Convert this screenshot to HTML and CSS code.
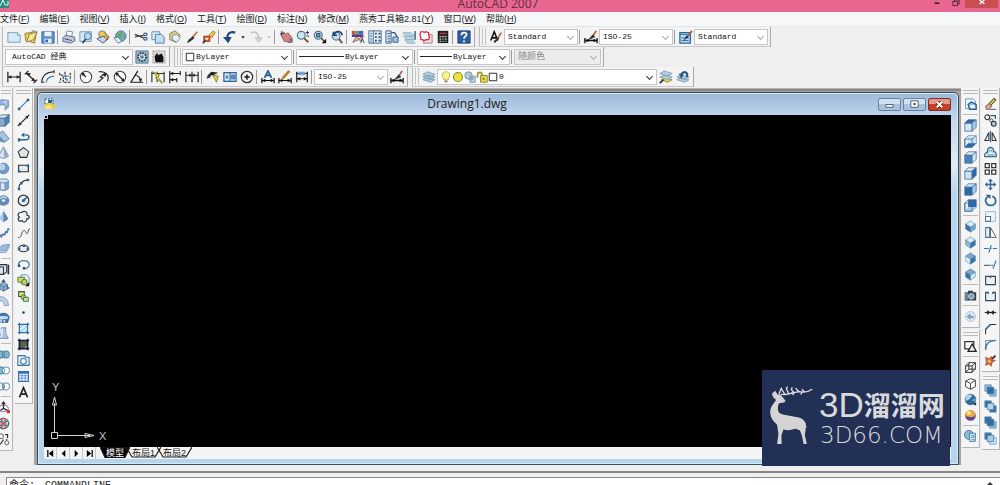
FILE: index.html
```html
<!DOCTYPE html>
<html lang="zh-CN">
<head>
<meta charset="utf-8">
<title>AutoCAD 2007</title>
<link rel="stylesheet" href="styles.css">
</head>
<body>
<svg class="sprite" aria-hidden="true">
<symbol id="new" viewBox="0 0 16 16"><path d="M1 3h11l3 3v8H1z" fill="#d5ecf8" stroke="#6f93ad"/><path d="M12 3v3h3" fill="#fff" stroke="#6f93ad"/></symbol>
<symbol id="open" viewBox="0 0 16 16"><path d="M1 4l5-1 8 1-2 11-10-3z" fill="#ecc95a" stroke="#8a7630"/><path d="M6 5l9-3-4 9-8 3z" fill="#f8e79b" stroke="#8a7630"/><path d="M8 3c2-3 5-2 6 0" fill="none" stroke="#456"/></symbol>
<symbol id="save" viewBox="0 0 16 16"><path d="M1 2h14v13H1z" fill="#5c93cf" stroke="#39649b"/><path d="M4 2h8v5H4zM4 10h8v5H4z" fill="#e4f0fa"/><path d="M5 11h3v3H5z" fill="#39649b"/></symbol>
<symbol id="print" viewBox="0 0 16 16"><path d="M4 8L6 1l6 1-1 6z" fill="#fff" stroke="#667aa0"/><path d="M1 9l3-3 10 2 1 4-5 3-9-2z" fill="#c2c9e2" stroke="#4c5c8a"/><path d="M3 10l8 2" stroke="#334" /></symbol>
<symbol id="preview" viewBox="0 0 16 16"><path d="M1 2h13v11H1z" fill="#d7eaf6" stroke="#6b8fb0"/><circle cx="10" cy="7" r="4" fill="#b3d9f3" stroke="#476f96"/><path d="M8 10l-4 5" stroke="#334c66" stroke-width="2"/></symbol>
<symbol id="publish" viewBox="0 0 16 16"><circle cx="7" cy="5" r="4" fill="#f2cb4d" stroke="#5b7d90"/><path d="M1 10l7-3 6 3-6 5z" fill="#c3d3ee" stroke="#3c5485"/><path d="M10 3l5 5-4 4" fill="#e2a63c" stroke="#6a5630"/></symbol>
<symbol id="globe" viewBox="0 0 16 16"><circle cx="9" cy="7" r="6" fill="#6ea9d6" stroke="#47749c"/><path d="M5 4l5-2 1 4-3 4-3-2zM11 8l3-1-1 4z" fill="#6aa95a"/><path d="M1 9l5-1 4 5-4 2z" fill="#e8eef8" stroke="#5a7698"/></symbol>
<symbol id="cut" viewBox="0 0 16 16"><path d="M1 5l10 4M1 8l10-2" stroke="#333" stroke-width="1.3"/><ellipse cx="13" cy="5" rx="2" ry="1.5" fill="none" stroke="#38608c" stroke-width="1.3"/><ellipse cx="13" cy="10" rx="2" ry="1.5" fill="none" stroke="#38608c" stroke-width="1.3"/></symbol>
<symbol id="copy" viewBox="0 0 16 16"><path d="M1 2h9v9H1z" fill="#dceefa" stroke="#5c86ad"/><path d="M5 5h7l3 3v7H5z" fill="#c2e0f4" stroke="#4a76a0"/></symbol>
<symbol id="paste" viewBox="0 0 16 16"><path d="M2 4l6-3 6 5-5 8-7-3z" fill="#d7cf84" stroke="#7c7a4e"/><path d="M5 6l5-1 4 4-4 5-5-3z" fill="#e8f3f8" stroke="#6a8aa0"/></symbol>
<symbol id="brush" viewBox="0 0 16 16"><path d="M14 2L8 9" stroke="#c87640" stroke-width="2"/><path d="M9 7l2 2-5 4-4 2 2-4z" fill="#333"/></symbol>
<symbol id="match" viewBox="0 0 16 16"><path d="M8 6l5-5 2 2-4 6z" fill="#f3ce3a" stroke="#856b20"/><path d="M2 7h7v6H2z" fill="#e4602e" stroke="#8a3a20"/><path d="M4 9h3v2H4z" fill="#fff"/><path d="M1 15l3-3" stroke="#333" stroke-width="2"/></symbol>
<symbol id="undo" viewBox="0 0 16 16"><path d="M14 3C8 1 4 4 5 12" fill="none" stroke="#1f487e" stroke-width="2.6"/><path d="M0 8h10l-4 7z" fill="#1f487e"/></symbol>
<symbol id="redo" viewBox="0 0 16 16"><path d="M2 3c6-2 10 1 9 9" fill="none" stroke="#c3c6ca" stroke-width="2"/><path d="M7 9h8l-4 5z" fill="#d5d8db" stroke="#b5b8bb"/></symbol>
<symbol id="dot" viewBox="0 0 6 16"><path d="M1 7h4L3 10z" fill="currentColor"/></symbol>
<symbol id="pan" viewBox="0 0 16 16"><path d="M2 5l3-3 3 3 2-2 5 6-3 5-6-1z" fill="#cf8580" stroke="#994f55"/><path d="M1 4h5M3 1v6M12 10l3 3M15 10v4h-4" stroke="#2a4a6c" fill="none"/></symbol>
<symbol id="zoomrt" viewBox="0 0 16 16"><circle cx="6" cy="6" r="4.5" fill="#cae5f5" stroke="#4c7598" stroke-width="1.3"/><path d="M9 9l5 5" stroke="#7a6040" stroke-width="2.4"/><path d="M11 3h4M13 1v4M12 7h3" stroke="#224"/></symbol>
<symbol id="zoomwin" viewBox="0 0 16 16"><circle cx="6" cy="6" r="4.5" fill="#cae5f5" stroke="#4c7598" stroke-width="1.3"/><path d="M4 4h4v4H4z" fill="#6498bc" stroke="#345"/><path d="M9 9l4 4" stroke="#7a6040" stroke-width="2.4"/><path d="M15 10v5h-5z" fill="#111"/></symbol>
<symbol id="zoomprev" viewBox="0 0 16 16"><circle cx="7" cy="7" r="4.5" fill="#bddcf1" stroke="#4c7598" stroke-width="1.3"/><path d="M10 10l4 5" stroke="#7a6040" stroke-width="2.4"/><path d="M14 6c-1-5-7-6-9-1M4 2v4h4" fill="none" stroke="#24496f" stroke-width="1.8"/></symbol>
<symbol id="props" viewBox="0 0 16 16"><path d="M1 1h4v4H1z" fill="#d14f45"/><path d="M5 1h4v4H5z" fill="#4cab50"/><path d="M9 1h5v4H9z" fill="#4164d0"/><path d="M1 5h13v3H1z" fill="#5b3980"/><path d="M2 14l4-6 3 2 5-3-2 6-3-2z" fill="#e8b9a0" stroke="#835c64"/><path d="M11 15l2-5 2 5" fill="none" stroke="#245"/></symbol>
<symbol id="dc" viewBox="0 0 16 16"><path d="M1 1h14v14H1z" fill="#e4f1fb" stroke="#31577e"/><path d="M6 1v14" stroke="#31577e"/><path d="M3 4h1M3 7h1M3 10h1M3 13h1M8 4h2M12 4h2M8 8h2M12 8h2M8 12h2M12 12h2" stroke="#244d7a" stroke-width="2"/></symbol>
<symbol id="palette" viewBox="0 0 16 16"><path d="M1 1h6v14H1z" fill="#cfe5f6" stroke="#31577e"/><path d="M3 4h3M3 7h3M3 10h3M3 13h3" stroke="#244d7a"/><path d="M7 3h4l3 5" fill="none" stroke="#31577e" stroke-width="1.5"/><path d="M9 8h6v6H9z" fill="#9fc4e5" stroke="#31577e"/></symbol>
<symbol id="sheet" viewBox="0 0 16 16"><path d="M1 3h9l5 4H6zM1 7h9l5 4H6zM3 11h8l4 4H6z" fill="#b9d5e5" stroke="#8fb0c4"/><path d="M15 1v10" stroke="#58809a" stroke-width="2"/></symbol>
<symbol id="markup" viewBox="0 0 16 16"><path d="M5 5h10v10H5z" fill="#f3dbdd" stroke="#a78"/><path d="M2 2h3l1 1 2-1 3 1v3l1 2-1 3H8l-2 1-2-1H2V8L1 6z" fill="#fff" stroke="#d52a38" stroke-width="1.4"/></symbol>
<symbol id="calc" viewBox="0 0 16 16"><path d="M2 1h12v14H2z" fill="#222"/><path d="M4 3h8v2H4z" fill="#a83a50"/><path d="M4 7.500h2M7 7.500h2M10 7.500h2M4 10.500h2M10 10.500h2M4 13h2" stroke="#ccc" stroke-width="1.5"/><path d="M7 10.500h2M7 13h2M10 13h2" stroke="#4aa268" stroke-width="1.5"/></symbol>
<symbol id="help" viewBox="0 0 16 16"><path d="M1 1h14v14H1z" fill="#2a5d9c" stroke="#173d70"/><path d="M5 6c0-4 6-4 6-1 0 2-3 2-3 5M8 12v2" fill="none" stroke="#fff" stroke-width="2"/></symbol>
<symbol id="tstyle" viewBox="0 0 16 16"><path d="M2 12L6 2l4 10M4 9h5" fill="none" stroke="#111" stroke-width="1.8"/><path d="M14 3l-5 8" stroke="#b66a3c" stroke-width="2"/><path d="M6 14l5-5" stroke="#333" stroke-width="2.4"/></symbol>
<symbol id="dstyle" viewBox="0 0 16 16"><path d="M1 9v6M15 9v6M1 12h14" stroke="#111" stroke-width="1.5"/><path d="M1 12l4-2v4zM15 12l-4-2v4z" fill="#111"/><path d="M14 1l-4 6" stroke="#a9613d" stroke-width="2"/><path d="M4 12l6-7 3 3z" fill="#333"/></symbol>
<symbol id="bstyle" viewBox="0 0 16 16"><path d="M1 3h12v12H1z" fill="#b4d6ee" stroke="#2f67a0" stroke-width="1.5"/><path d="M1 5h12M3 9h8M3 12h8" stroke="#2f67a0"/><path d="M15 1l-5 6" stroke="#a9613d" stroke-width="2"/><path d="M5 12l4-6 2 2z" fill="#224"/></symbol>
<symbol id="gear" viewBox="0 0 16 16"><path d="M1 1h14v14H1z" fill="#8bb3cf" stroke="#527b9a"/><circle cx="8" cy="8" r="4.500" fill="#dce9f0" stroke="#333" stroke-width="2" stroke-dasharray="2 1"/><circle cx="8" cy="8" r="2" fill="#4f7694"/></symbol>
<symbol id="wspace" viewBox="0 0 16 16"><path d="M1 1h14v14H1z" fill="#d7d7d7" stroke="#999" stroke-dasharray="2 1"/><path d="M3 7l3-4 1 3 4-2 2 4v6H4z" fill="#111"/></symbol>
<symbol id="dlin" viewBox="0 0 16 16"><path d="M1 2v12M15 2v12M1 8h14" stroke="#222" stroke-width="1.400"/><path d="M1 8l4-2v4zM15 8l-4-2v4z" fill="#222"/></symbol>
<symbol id="dali" viewBox="0 0 16 16"><path d="M1 5l4-4M11 15l4-4M3 4l10 9" stroke="#222" stroke-width="1.500"/><path d="M3 3l5 1-3 3zM13 13l-5-1 3-3z" fill="#222"/></symbol>
<symbol id="darc" viewBox="0 0 16 16"><path d="M1 14C1 6 7 2 15 2" fill="none" stroke="#222" stroke-width="1.300"/><path d="M6 14c0-4 4-7 9-7" fill="none" stroke="#4c86b5" stroke-width="1.500"/><path d="M0 14h4M15 0v4" stroke="#222"/></symbol>
<symbol id="dord" viewBox="0 0 16 16"><path d="M2 3v3h4v8h9M8 2v5h4M14 3v9M1 14h2M3 9v3" fill="none" stroke="#222" stroke-width="1.200" stroke-dasharray="3 1"/><path d="M8 9l3 3" stroke="#4b79a5" stroke-width="2"/></symbol>
<symbol id="drad" viewBox="0 0 16 16"><circle cx="8" cy="8" r="6.500" fill="#f8fafb" stroke="#444" stroke-width="1.200"/><path d="M4 4l4 4" stroke="#222" stroke-width="1.300"/><path d="M3 3l4 1-3 3z" fill="#222"/></symbol>
<symbol id="djog" viewBox="0 0 16 16"><path d="M3 2c8-1 13 4 10 11M2 14l6-5-3-1 5-4" fill="none" stroke="#333" stroke-width="1.400"/><path d="M12 3l-1 5-4-3z" fill="#222"/></symbol>
<symbol id="ddia" viewBox="0 0 16 16"><circle cx="8" cy="8" r="6.500" fill="#f8fafb" stroke="#444" stroke-width="1.200"/><path d="M4 4l8 8" stroke="#222" stroke-width="1.500"/><path d="M3 3l4 1-3 3zM13 13l-4-1 3-3z" fill="#222"/></symbol>
<symbol id="dang" viewBox="0 0 16 16"><path d="M15 14H1L9 1M5 6c4 0 7 2 7 7" fill="none" stroke="#222" stroke-width="1.400"/><path d="M12 14l-2-4h4z" fill="#222"/></symbol>
<symbol id="qdim" viewBox="0 0 16 16"><path d="M1 2v12M7 2v12M15 2v12M1 4h14" stroke="#333" stroke-width="1.300"/><path d="M2 2l8 4-2 2 5 7-8-6 2-1z" fill="#e6db3c" stroke="#84791e"/></symbol>
<symbol id="dbase" viewBox="0 0 16 16"><path d="M2 1v14M14 1v5M10 9v5M2 4h12M2 11h8" stroke="#222" stroke-width="1.300"/><path d="M2 4l4-2v4zM2 11l4-2v4z" fill="#222"/></symbol>
<symbol id="dcont" viewBox="0 0 16 16"><path d="M1 2v12M8 2v12M15 2v12M1 6h14" stroke="#222" stroke-width="1.300"/><path d="M8 6L5 4v4zM8 6l3-2v4z" fill="#222"/></symbol>
<symbol id="lead" viewBox="0 0 16 16"><path d="M1 7l5-5 8 1-6 3z" fill="#222"/><path d="M8 6l6 1-2 7z" fill="#e6d83c" stroke="#84791e"/><path d="M1 9l4-2" stroke="#333" stroke-width="2"/></symbol>
<symbol id="tol" viewBox="0 0 16 16"><path d="M1 3h14v10H1z" fill="#c9e2f5" stroke="#2f6496" stroke-width="1.400"/><path d="M8 3v10M3 8h3M4.500 6v4M10 6h3v4h-3zM10 8h3" fill="none" stroke="#2f6496" stroke-width="1.200"/></symbol>
<symbol id="center" viewBox="0 0 16 16"><circle cx="8" cy="8" r="6.500" fill="none" stroke="#333" stroke-width="1.400"/><path d="M5 8h6M8 5v6" stroke="#111" stroke-width="1.600"/></symbol>
<symbol id="dedit" viewBox="0 0 16 16"><path d="M1 9v6M15 9v6M1 12h14" stroke="#111" stroke-width="1.400"/><path d="M1 12l4-2v4zM15 12l-4-2v4z" fill="#111"/><path d="M4 9l4-8 4 8M6 6h4" fill="none" stroke="#2d5d9b" stroke-width="2"/></symbol>
<symbol id="dtedit" viewBox="0 0 16 16"><path d="M1 9v6M15 9v6M1 12h14" stroke="#111" stroke-width="1.400"/><path d="M1 12l4-2v4zM15 12l-4-2v4z" fill="#111"/><path d="M5 10l8-9" stroke="#b98222" stroke-width="3"/></symbol>
<symbol id="dupd" viewBox="0 0 16 16"><path d="M2 2v12M14 2v12M1 4h14M1 10h14" stroke="#222" stroke-width="1.400"/><path d="M4 2h8v4H4z" fill="#74a6ce"/><path d="M2 10l4-2v4zM14 10l-4-2v4z" fill="#111"/></symbol>
<symbol id="layers" viewBox="0 0 16 16"><path d="M1 11l5-2 9 2-5 3zM1 8l5-2 9 2-5 3zM1 5l5-3 9 3-5 3z" fill="#b4cfe0" stroke="#7c9db2"/></symbol>
<symbol id="layercur" viewBox="0 0 16 16"><path d="M3 11l5-2 7 2-5 3z" fill="#e5db4a" stroke="#858040"/><path d="M1 8l5-2 9 2-5 3zM1 4l5-3 9 3-5 3z" fill="#b4cfe0" stroke="#7c9db2"/><path d="M1 15l4-4" stroke="#333" stroke-width="2"/></symbol>
<symbol id="layerprev" viewBox="0 0 16 16"><path d="M1 11l5-2 9 2-5 3zM1 8l5-2 9 2-5 3z" fill="#b4cfe0" stroke="#7c9db2"/><path d="M12 8c3-5-3-8-6-3" fill="none" stroke="#28577f" stroke-width="2.500"/><path d="M3 4l6 1-3 5z" fill="#28577f"/></symbol>
<symbol id="bulb" viewBox="0 0 16 16"><path d="M5 10C1 6 3 1 8 1s7 5 3 9v2H5z" fill="#fbf38d" stroke="#a99b39"/><path d="M6 13h4v2H6z" fill="#777"/></symbol>
<symbol id="sun" viewBox="0 0 16 16"><circle cx="8" cy="8" r="6" fill="#eee23d" stroke="#89853f" stroke-width="1.500"/></symbol>
<symbol id="vpf" viewBox="0 0 16 16"><circle cx="6" cy="6" r="5" fill="#b4ccd4" stroke="#647f88"/><path d="M8 7h7v8H8z" fill="#c4dcec" stroke="#5c7992"/><circle cx="10" cy="10" r="3" fill="#87adbd"/></symbol>
<symbol id="lock" viewBox="0 0 16 16"><path d="M2 9V5c0-4 6-4 6 0v3" fill="none" stroke="#a39e3c" stroke-width="2.500"/><path d="M6 6h9v9H6z" fill="#e4d93d" stroke="#78732d"/><path d="M10 9v3" stroke="#78732d" stroke-width="2"/></symbol>
<symbol id="swatch" viewBox="0 0 16 16"><path d="M2 2h12v12H2z" fill="#fff" stroke="#222" stroke-width="1.500"/></symbol>
<symbol id="line" viewBox="0 0 16 16"><path d="M2 14L14 2" stroke="#3f6f9f" stroke-width="1.400"/><path d="M1 12h3v3H1zM12 1h3v3h-3z" fill="#265b92"/></symbol>
<symbol id="xline" viewBox="0 0 16 16"><path d="M1 15L15 1" stroke="#222" stroke-width="1.500"/><path d="M2 14l1-4 3 3zM14 2l-1 4-3-3z" fill="#222"/></symbol>
<symbol id="pline" viewBox="0 0 16 16"><path d="M2 12h9c5 0 5-6 0-6H9" fill="none" stroke="#2e6790" stroke-width="1.700"/><path d="M9 3v6L5 6zM1 10h3v4H1z" fill="#2e6790"/></symbol>
<symbol id="poly" viewBox="0 0 16 16"><path d="M8 2l6.500 5-2.500 7H4L1.500 7z" fill="#dbe7ed" stroke="#333" stroke-width="1.300"/></symbol>
<symbol id="rect" viewBox="0 0 16 16"><path d="M2 4h12v8H2z" fill="#e1edf5" stroke="#333" stroke-width="1.400"/><path d="M1 10h3v3H1zM12 3h3v3h-3z" fill="#2c638f"/></symbol>
<symbol id="arc" viewBox="0 0 16 16"><path d="M2 14C2 7 6 3 14 2" fill="none" stroke="#333" stroke-width="1.400"/><path d="M1 12h3v3H1zM12 1h3v3h-3zM4 5h3v3H4z" fill="#2c638f"/></symbol>
<symbol id="circle" viewBox="0 0 16 16"><circle cx="8" cy="8" r="6.500" fill="#e3f0f8" stroke="#333" stroke-width="1.500"/><path d="M8 8l4-4" stroke="#2c638f" stroke-width="2"/><circle cx="8" cy="8" r="2" fill="#2c638f"/></symbol>
<symbol id="cloud" viewBox="0 0 16 16"><path d="M6 3c3-3 8 0 6 3 4 1 4 5 0 5 0 4-4 5-6 2-4 2-6-2-3-4-4-3 0-7 3-6z" fill="#eaf4fa" stroke="#333" stroke-width="1.400"/></symbol>
<symbol id="spline" viewBox="0 0 16 16"><path d="M1 14c3 1 4-1 5-5s4-5 5-1 3-1 4-5" fill="none" stroke="#444" stroke-width="1.200"/></symbol>
<symbol id="ellipse" viewBox="0 0 16 16"><ellipse cx="8" cy="8" rx="6" ry="4" fill="#e0edf6" stroke="#333" stroke-width="1.500"/><path d="M1 7h3v3H1zM12 7h3v3h-3zM7 3h3v3H7z" fill="#2c638f"/></symbol>
<symbol id="earc" viewBox="0 0 16 16"><path d="M2 9C0 2 15 1 15 8c0 3-3 5-6 5" fill="none" stroke="#46799e" stroke-width="1.600"/><path d="M1 8h3v3H1zM7 11h3v3H7z" fill="#225785"/></symbol>
<symbol id="insert" viewBox="0 0 16 16"><path d="M5 1h7l3 3v8H5z" fill="#dceefa" stroke="#5c86ad"/><path d="M1 4h8v6H1z" fill="#cddd68" stroke="#526c2c"/><circle cx="9" cy="10" r="3.500" fill="#b9d05f" stroke="#526c2c"/><path d="M15 10v5h-5z" fill="#111"/></symbol>
<symbol id="block" viewBox="0 0 16 16"><path d="M2 2h7v6H2z" fill="#d4e178" stroke="#3e5c40" stroke-width="1.300"/><circle cx="8" cy="9" r="3" fill="#b9d05f" stroke="#3e5c40"/><path d="M8 9h6v5H8z" fill="#b9e0a0" stroke="#3e5c40"/></symbol>
<symbol id="point" viewBox="0 0 16 16"><circle cx="8" cy="8" r="1.600" fill="#17496f"/></symbol>
<symbol id="hatch" viewBox="0 0 16 16"><path d="M3 3h10v10H3z" fill="#dcf0fc"/><path d="M3 1v14M13 1v14M1 3h14M1 13h14" stroke="#2e6b9e" stroke-width="1.500"/><path d="M3 8l5-5M4 13l9-9M9 13l4-4" stroke="#6ca4ce"/></symbol>
<symbol id="grad" viewBox="0 0 16 16"><path d="M3 3h10v10H3z" fill="#59664e"/><path d="M8 13l5-5v5z" fill="#a4b077"/><path d="M3 1v14M13 1v14M1 3h14M1 13h14" stroke="#161d3b" stroke-width="2"/></symbol>
<symbol id="region" viewBox="0 0 16 16"><path d="M1 2h9v2h5v10H1z" fill="#d8ecf9" stroke="#3f76a3" stroke-width="1.300"/><circle cx="8" cy="9" r="3.500" fill="#fff" stroke="#3f76a3" stroke-width="1.300"/></symbol>
<symbol id="table" viewBox="0 0 16 16"><path d="M2 2h12v12H2z" fill="#f2f8ff" stroke="#326bb0" stroke-width="1.400"/><path d="M2 3h12" stroke="#326bb0" stroke-width="3"/><path d="M2 7h12M2 10h12M6 2v12M10 2v12" stroke="#5b8cc8"/></symbol>
<symbol id="mtext" viewBox="0 0 16 16"><path d="M3 14L8 2l5 12M4.500 10h7" fill="none" stroke="#222" stroke-width="2"/></symbol>
<symbol id="psolid" viewBox="0 0 16 16"><path d="M1 4l5-2 8 1v8l-4 4V8L1 9z" fill="#91b4dc" stroke="#6286ae"/><path d="M7 5l4-1v5" fill="none" stroke="#e7f0fa"/></symbol>
<symbol id="cube" viewBox="0 0 16 16"><path d="M1 5h9v10H1z" fill="var(--f)" stroke="#456f98"/><path d="M1 5l4-4h10l-5 4z" fill="var(--t)" stroke="#456f98"/><path d="M10 5l5-4v9l-5 5z" fill="var(--s)" stroke="#456f98"/></symbol>
<symbol id="cubein" viewBox="0 0 16 16"><path d="M1 5l4-4h10v9l-5 5H1z" fill="#e4f2fb" stroke="#456f98"/><path d="M5 1h10v9H5z" fill="var(--b)"/><path d="M1 15l4-5h10l-5 5z" fill="var(--d)"/><path d="M1 5h9v10H1zM10 5l5-4" fill="none" stroke="#456f98"/></symbol>
<symbol id="iso" viewBox="0 0 16 16"><path d="M8 1l6 4-6 4-6-4z" fill="var(--t)" stroke="#58819f" stroke-width=".7"/><path d="M2 5l6 4v6l-6-4z" fill="var(--f)" stroke="#58819f" stroke-width=".7"/><path d="M14 5L8 9v6l6-4z" fill="var(--s)" stroke="#58819f" stroke-width=".7"/></symbol>
<symbol id="wedge" viewBox="0 0 16 16"><path d="M1 6l6-5 8 10-6 4z" fill="#a9c4e3" stroke="#5b7ea6"/><path d="M1 6v7l8 2z" fill="#6f97c3" stroke="#5b7ea6"/></symbol>
<symbol id="cone" viewBox="0 0 16 16"><path d="M8 1l6 11c-2 4-10 4-12 0z" fill="#d7e3f1" stroke="#647e9c"/><path d="M8 1l6 11c-1 2-3 2-5 3z" fill="#8eabcb"/></symbol>
<symbol id="sphere" viewBox="0 0 16 16"><circle cx="8" cy="8" r="6.500" fill="#739bc9" stroke="#537aa8"/><circle cx="6" cy="6" r="4" fill="#b9d1ec"/></symbol>
<symbol id="cyl" viewBox="0 0 16 16"><path d="M2 3v10c2 3 10 3 12 0V3z" fill="#7ea3cf" stroke="#5a7fa9"/><path d="M5 5v9h4V5z" fill="#dce8f7"/><ellipse cx="8" cy="3.500" rx="6" ry="2.500" fill="#d0e0f3" stroke="#5a7fa9"/></symbol>
<symbol id="torus" viewBox="0 0 16 16"><ellipse cx="8" cy="8" rx="4.700" ry="4" fill="none" stroke="#5f8bbb" stroke-width="5"/><path d="M4 6c2-3 5-3 8-1" fill="none" stroke="#bfd6ef" stroke-width="2"/></symbol>
<symbol id="pyr" viewBox="0 0 16 16"><path d="M8 1l6 10-6 4-6-4z" fill="#b1cce9"/><path d="M8 1l6 10-6 4z" fill="#5986b8"/></symbol>
<symbol id="helix" viewBox="0 0 16 16"><path d="M1 13c4-6 4 4 5-1s3 2 4-3 2 2 3-3 1 0 2-3" fill="none" stroke="#4d76a8" stroke-width="2"/></symbol>
<symbol id="plane" viewBox="0 0 16 16"><path d="M1 11L6 4l9-1-4 8z" fill="#9abbe1" stroke="#6e93be"/><path d="M1 11v2h10l4-7V3" fill="none" stroke="#6e93be"/></symbol>
<symbol id="extrude" viewBox="0 0 16 16"><path d="M1 5h7v9H1zM1 5l3-3h8v9l-4 3" fill="#d9e5ef" stroke="#333" stroke-width="1.300"/><path d="M14 2v12" stroke="#234" stroke-width="2"/></symbol>
<symbol id="press" viewBox="0 0 16 16"><path d="M8 4l5 3v5l-5 3-5-3V7z" fill="#8fb1d4" stroke="#41658c"/><path d="M3 7l5 3 5-3M8 10v5" fill="none" stroke="#41658c"/><path d="M8 0l3 4H5zM0 11l4-2v4zM16 11l-4-2v4z" fill="#345a80"/></symbol>
<symbol id="sweep" viewBox="0 0 16 16"><path d="M1 3c7-3 13 2 13 10h-5c0-5-3-7-8-5z" fill="#bed1e7" stroke="#7692b4"/></symbol>
<symbol id="revolve" viewBox="0 0 16 16"><path d="M1 8c1-7 13-7 14 0l-2 6H3z" fill="#3e78ac" stroke="#27577f"/><ellipse cx="8" cy="8" rx="6" ry="2" fill="#c4def2"/><path d="M5 10v4M9 11v3" stroke="#dbe9f5" stroke-width="2"/></symbol>
<symbol id="loft" viewBox="0 0 16 16"><path d="M5 1h6c-1 6 0 8 3 13H2c3-5 4-7 3-13z" fill="#a9c4e3" stroke="#6587af"/><path d="M6 2c1 5 0 8-1 11" stroke="#e9f1fa" fill="none" stroke-width="2"/></symbol>
<symbol id="bool" viewBox="0 0 16 16"><circle cx="5" cy="8" r="4.500" fill="var(--f)" stroke="#3d7493"/><circle cx="11" cy="8" r="4.500" fill="var(--s)" stroke="#3d7493"/><path d="M8 5c2 2 2 4 0 6-2-2-2-4 0-6" fill="var(--t)" stroke="#3d7493"/></symbol>
<symbol id="move3" viewBox="0 0 16 16"><path d="M8 1v8l7 4M8 9l-6 4" fill="none" stroke="#222" stroke-width="1.400"/><ellipse cx="8" cy="9" rx="6" ry="4" fill="none" stroke="#748"/><path d="M12 11h4v4h-4z" fill="#c5393d"/><path d="M5 4l3-4 3 4z" fill="#333"/></symbol>
<symbol id="rot3" viewBox="0 0 16 16"><circle cx="8" cy="8" r="6.500" fill="none" stroke="#356c92" stroke-width="1.300"/><ellipse cx="8" cy="8" rx="3" ry="6.500" fill="none" stroke="#a5474e" stroke-width="1.300"/><ellipse cx="8" cy="8" rx="6.500" ry="3" fill="none" stroke="#45707c" stroke-width="1.300"/><path d="M6 6h4v4H6z" fill="#cf5b5b"/></symbol>
<symbol id="align3" viewBox="0 0 16 16"><circle cx="5" cy="4" r="3" fill="none" stroke="#444"/><circle cx="12" cy="12" r="2.500" fill="none" stroke="#444"/><path d="M10 2h3v4M4 14l4-6M12 7v2" fill="none" stroke="#333" stroke-width="1.400"/></symbol>
<symbol id="views" viewBox="0 0 16 16"><path d="M2 1h9l3 3v9H2z" fill="#edf6fc" stroke="#5d87ac"/><path d="M5 8l4-3 6 3v6H7z" fill="#9bc4e6" stroke="#245989" stroke-width="1.500"/><path d="M8 9h5v3H8z" fill="#fff"/></symbol>
<symbol id="camera" viewBox="0 0 16 16"><path d="M1 4h4V2h6v2h4v10H1z" fill="#304152"/><path d="M1 4h4v9H1z" fill="#718496"/><circle cx="9" cy="9" r="3.500" fill="#7da2bc" stroke="#dae4ec"/></symbol>
<symbol id="back" viewBox="0 0 16 16"><circle cx="8" cy="8" r="6" fill="#e4edf4" stroke="#9bb3c7"/><path d="M3 8l5-4v3h4v3H8v2z" fill="#7ba3c5"/></symbol>
<symbol id="vs2d" viewBox="0 0 16 16"><path d="M1 2h11v9H1z" fill="#fff" stroke="#333" stroke-width="1.500"/><path d="M5 14L10 5l5 9z" fill="#e7f0f5" stroke="#222" stroke-width="1.500"/></symbol>
<symbol id="wire" viewBox="0 0 16 16"><path d="M2 6h8v8H2zM6 2h8v8M2 6l4-4v8h8M10 6l4-4M10 14l4-4M2 14l4-4" fill="none" stroke="#333" stroke-width="1.200"/></symbol>
<symbol id="hidden" viewBox="0 0 16 16"><path d="M2 5l6-3 6 2v8l-6 3-6-3zM2 5l6 3 6-4M8 8v7" fill="#fff" stroke="#444" stroke-width="1.200"/></symbol>
<symbol id="real" viewBox="0 0 16 16"><circle cx="8" cy="8" r="6.500" fill="#2c6a98" stroke="#3d6481"/><path d="M2 5c4-5 8-3 8-1L6 8 2 10z" fill="#acd3ea"/><path d="M9 9l5-3v5z" fill="#70a5c9"/><path d="M12 12h3v3h-3z" fill="#333"/></symbol>
<symbol id="concept" viewBox="0 0 16 16"><circle cx="8" cy="8" r="6.500" fill="#564992"/><path d="M2 9C0 0 13-1 14 7 10 13 5 8 2 9" fill="#f3a63a"/><circle cx="6" cy="5" r="2.500" fill="#ffe58e"/></symbol>
<symbol id="vsman" viewBox="0 0 16 16"><circle cx="6" cy="6" r="5.500" fill="#8bb9d8" stroke="#366a94"/><path d="M7 4h7v10H7z" fill="#e0f0fb" stroke="#366a94"/><path d="M9 7h4M9 9h4M9 12h4" stroke="#366a94"/></symbol>
<symbol id="erase" viewBox="0 0 16 16"><path d="M14 1L7 8" stroke="#4b4a35" stroke-width="4"/><path d="M13 2L7 8" stroke="#e8cf47" stroke-width="2"/><path d="M2 10l4-3 4 3-4 4H3z" fill="#dba49a" stroke="#784a45"/><path d="M7 14h8" stroke="#333"/></symbol>
<symbol id="copyobj" viewBox="0 0 16 16"><circle cx="4" cy="4" r="3" fill="#eaf4fa" stroke="#333" stroke-width="1.300"/><circle cx="12" cy="12" r="3" fill="#a5cbe5" stroke="#333" stroke-width="1.300"/><path d="M8 2h6v4" fill="none" stroke="#285e8c" stroke-width="1.500"/><circle cx="9" cy="8" r="2" fill="none" stroke="#333"/></symbol>
<symbol id="mirror" viewBox="0 0 16 16"><path d="M8 1v14" stroke="#2d6593" stroke-width="1.400"/><path d="M6 3v10H1zM10 3v10h5z" fill="#eaf3f8" stroke="#333" stroke-width="1.300"/></symbol>
<symbol id="offset" viewBox="0 0 16 16"><path d="M1 13c-1-5 3-5 3-5C4 0 12 0 12 7c4 0 3 6 3 6z" fill="#e4f2fa" stroke="#386d94" stroke-width="1.600"/><path d="M4 11h9M6 8c0-4 4-4 4 0" fill="none" stroke="#386d94"/></symbol>
<symbol id="array" viewBox="0 0 16 16"><path d="M1.500 2h5v5h-5zM9.500 2h5v5h-5zM1.500 10h5v5h-5zM9.500 10h5v5h-5z" fill="#fff" stroke="#333" stroke-width="1.500"/></symbol>
<symbol id="move" viewBox="0 0 16 16"><path d="M8 2v12M2 8h12" stroke="#2d699f" stroke-width="1.800"/><path d="M8 1l3 3H5zM8 15l3-3H5zM1 8l3-3v6zM15 8l-3-3v6z" fill="#2d699f"/></symbol>
<symbol id="rotate" viewBox="0 0 16 16"><path d="M5 3C-1 7 3 15 9 14c7-1 7-9 1-11" fill="none" stroke="#386e99" stroke-width="2.200"/><path d="M2 1h6v5z" fill="#285f8c"/></symbol>
<symbol id="scale" viewBox="0 0 16 16"><path d="M2 2h12v12H2z" fill="#eef5fa" stroke="#8fabc2"/><path d="M2 8h6v6H2z" fill="#fff" stroke="#47779f" stroke-width="1.300"/></symbol>
<symbol id="stretch" viewBox="0 0 16 16"><path d="M2 2h5v12H2z" fill="#e7f0f7" stroke="#45769d" stroke-width="1.300"/><path d="M8 2l7 12H8z" fill="#fff" stroke="#444"/></symbol>
<symbol id="trim" viewBox="0 0 16 16"><path d="M0 8h5M11 8h5M6 13l3-9" stroke="#3778a8" stroke-width="1.400"/><path d="M5 8h6" stroke="#3778a8" stroke-dasharray="1 1"/></symbol>
<symbol id="extend" viewBox="0 0 16 16"><path d="M0 9h6M11 13l4-10" stroke="#3778a8" stroke-width="1.400"/><path d="M6 9h6" stroke="#222" stroke-dasharray="2 1"/></symbol>
<symbol id="breakpt" viewBox="0 0 16 16"><path d="M2 3h12v10H2z" fill="#e5eff8" stroke="#444" stroke-width="1.400"/><path d="M7 2h2v3H7z" fill="#35709e"/></symbol>
<symbol id="break" viewBox="0 0 16 16"><path d="M5 3H2v10h12V3h-3" fill="#e5eff8" stroke="#444" stroke-width="1.400"/><path d="M4 2h2v3H4zM10 2h2v3h-2z" fill="#35709e"/></symbol>
<symbol id="join" viewBox="0 0 16 16"><path d="M1 8h14" stroke="#222" stroke-width="1.500"/><path d="M4 5l4 3-4 3zM12 5L8 8l4 3z" fill="#222"/></symbol>
<symbol id="chamfer" viewBox="0 0 16 16"><path d="M2 15V9l6-6h7" fill="none" stroke="#333" stroke-width="1.300"/><path d="M2 9l6-6" stroke="#397caf" stroke-width="2"/></symbol>
<symbol id="fillet" viewBox="0 0 16 16"><path d="M2 15V3h13" fill="none" stroke="#678"/><path d="M2 14C2 7 7 3 14 3" fill="none" stroke="#347aae" stroke-width="2"/></symbol>
<symbol id="explode" viewBox="0 0 16 16"><path d="M2 4l4 2 3-3 1 4 4 1-4 2-1 5-3-3-4 2 1-4z" fill="#d47135" stroke="#a8482a"/><path d="M5 8l3 2" stroke="#f7d9a6" stroke-width="2"/><path d="M10 6l4-4" stroke="#333" stroke-width="2.500"/></symbol>
<symbol id="order" viewBox="0 0 16 16"><path d="M1 1h8v8H1z" fill="var(--f)" stroke="#7098b8"/><path d="M7 7h8v8H7z" fill="var(--s)" stroke="#7098b8"/><path d="M4 4h8v8H4z" fill="var(--t)" stroke="#4d7da3"/></symbol>
</svg>

<header class="titlebar">
  <svg class="logo" viewBox="0 0 9 8"><path d="M0 0h9v8H0z" fill="#268a80"/><path d="M0 6l3-6 2 5h3V1" fill="none" stroke="#e0fff7"/></svg>
  <h1>AutoCAD 2007</h1>
  <div class="sys">
    <button aria-label="最小化"><svg viewBox="0 0 10 10"><path d="M2 4h6" stroke="#33202a" stroke-width="2"/></svg></button>
    <button aria-label="还原"><svg viewBox="0 0 10 10"><path d="M1 2h6v5H1zM3 2V0h6v5H7" fill="none" stroke="#33202a"/></svg></button>
    <button class="close" aria-label="关闭"><svg viewBox="0 0 10 10"><path d="M2 0l6 5M8 0L2 5" stroke="#fff" stroke-width="1.500"/></svg></button>
  </div>
</header>

<nav class="menu">
  <button>文件(<u>F</u>)</button><button>编辑(<u>E</u>)</button><button>视图(<u>V</u>)</button><button>插入(<u>I</u>)</button><button>格式(<u>O</u>)</button><button>工具(<u>T</u>)</button><button>绘图(<u>D</u>)</button><button>标注(<u>N</u>)</button><button>修改(<u>M</u>)</button><button>燕秀工具箱2.81(<u>Y</u>)</button><button>窗口(<u>W</u>)</button><button>帮助(<u>H</u>)</button>
</nav>

<div class="row">
  <div class="bar">
    <button aria-label="新建"><svg><use href="#new"/></svg></button><button aria-label="打开"><svg><use href="#open"/></svg></button><button aria-label="保存"><svg><use href="#save"/></svg></button><i></i>
    <button aria-label="打印"><svg><use href="#print"/></svg></button><button aria-label="预览"><svg><use href="#preview"/></svg></button><button aria-label="发布"><svg><use href="#publish"/></svg></button><button aria-label="网络"><svg><use href="#globe"/></svg></button><i></i>
    <button aria-label="剪切"><svg><use href="#cut"/></svg></button><button aria-label="复制"><svg><use href="#copy"/></svg></button><button aria-label="粘贴"><svg><use href="#paste"/></svg></button><button aria-label="画笔"><svg><use href="#brush"/></svg></button><button aria-label="特性匹配"><svg><use href="#match"/></svg></button><i></i>
    <button aria-label="放弃"><svg><use href="#undo"/></svg></button><button class="drop" aria-label="放弃列表"><svg><use href="#dot"/></svg></button><button aria-label="重做"><svg><use href="#redo"/></svg></button><button class="drop off" aria-label="重做列表"><svg><use href="#dot"/></svg></button><i></i>
    <button aria-label="平移"><svg><use href="#pan"/></svg></button><button aria-label="实时缩放"><svg><use href="#zoomrt"/></svg></button><button aria-label="窗口缩放"><svg><use href="#zoomwin"/></svg></button><button aria-label="上一个"><svg><use href="#zoomprev"/></svg></button><i></i>
    <button aria-label="特性"><svg><use href="#props"/></svg></button><button aria-label="设计中心"><svg><use href="#dc"/></svg></button><button aria-label="工具选项板"><svg><use href="#palette"/></svg></button><button aria-label="图纸集"><svg><use href="#sheet"/></svg></button><button aria-label="标记集"><svg><use href="#markup"/></svg></button><button aria-label="计算器"><svg><use href="#calc"/></svg></button><i></i>
    <button aria-label="帮助"><svg><use href="#help"/></svg></button>
  </div>
  <div class="bar">
    <b></b><button aria-label="文字样式管理"><svg><use href="#tstyle"/></svg></button><span class="combo dim w74"><select aria-label="文字样式"><option>Standard</option></select></span><i></i>
    <button aria-label="标注样式管理"><svg><use href="#dstyle"/></svg></button><span class="combo dim w74"><select aria-label="标注样式"><option>ISO-25</option></select></span><i></i>
    <button aria-label="表格样式管理"><svg><use href="#bstyle"/></svg></button><span class="combo dim w74"><select aria-label="表格样式"><option>Standard</option></select></span>
  </div>
</div>

<div class="row">
  <div class="bar">
    <span class="combo w128"><select aria-label="工作空间"><option>AutoCAD 经典</option></select></span>
    <button aria-label="工作空间设置"><svg><use href="#gear"/></svg></button><button aria-label="我的工作空间"><svg><use href="#wspace"/></svg></button>
  </div>
  <div class="bar">
    <b></b><span class="combo w110"><svg><use href="#swatch"/></svg><select aria-label="颜色"><option>ByLayer</option></select></span><i></i>
    <span class="combo w117"><em class="stroke long"></em><select aria-label="线型"><option>ByLayer</option></select></span><i></i>
    <span class="combo w93"><em class="stroke"></em><select aria-label="线宽"><option>ByLayer</option></select></span><i></i>
    <span class="combo off dim w87"><select aria-label="打印样式" disabled><option>随颜色</option></select></span>
  </div>
</div>

<div class="row">
  <div class="bar">
    <button aria-label="线性"><svg><use href="#dlin"/></svg></button><button aria-label="对齐"><svg><use href="#dali"/></svg></button><button aria-label="弧长"><svg><use href="#darc"/></svg></button><button aria-label="坐标"><svg><use href="#dord"/></svg></button><i></i>
    <button aria-label="半径"><svg><use href="#drad"/></svg></button><button aria-label="折弯"><svg><use href="#djog"/></svg></button><button aria-label="直径"><svg><use href="#ddia"/></svg></button><button aria-label="角度"><svg><use href="#dang"/></svg></button><i></i>
    <button aria-label="快速标注"><svg><use href="#qdim"/></svg></button><button aria-label="基线"><svg><use href="#dbase"/></svg></button><button aria-label="连续"><svg><use href="#dcont"/></svg></button><i></i>
    <button aria-label="引线"><svg><use href="#lead"/></svg></button><button aria-label="公差"><svg><use href="#tol"/></svg></button><button aria-label="圆心标记"><svg><use href="#center"/></svg></button><i></i>
    <button aria-label="编辑标注"><svg><use href="#dedit"/></svg></button><button aria-label="编辑标注文字"><svg><use href="#dtedit"/></svg></button><button aria-label="标注更新"><svg><use href="#dupd"/></svg></button><i></i>
    <span class="combo dim w74"><select aria-label="当前标注样式"><option>ISO-25</option></select></span><button aria-label="样式"><svg><use href="#dstyle"/></svg></button>
  </div>
  <div class="bar">
    <b></b><button aria-label="图层管理"><svg><use href="#layers"/></svg></button>
    <span class="combo w220"><svg><use href="#bulb"/></svg><svg><use href="#sun"/></svg><svg><use href="#vpf"/></svg><svg><use href="#lock"/></svg><svg class="sw"><use href="#swatch"/></svg><select aria-label="图层"><option>0</option></select></span>
    <button aria-label="设为当前图层"><svg><use href="#layercur"/></svg></button><button aria-label="上一个图层"><svg><use href="#layerprev"/></svg></button>
  </div>
</div>

<main class="work">
  <aside class="dock left">
    <div class="stack cut">
      <div class="vbar">
        <b></b><button aria-label="多段体"><svg><use href="#psolid"/></svg></button><button class="solid" aria-label="长方体"><svg><use href="#cube"/></svg></button><button aria-label="楔体"><svg><use href="#wedge"/></svg></button><button aria-label="圆锥体"><svg><use href="#cone"/></svg></button><button aria-label="球体"><svg><use href="#sphere"/></svg></button><button aria-label="圆柱体"><svg><use href="#cyl"/></svg></button><button aria-label="圆环体"><svg><use href="#torus"/></svg></button><button aria-label="棱锥面"><svg><use href="#pyr"/></svg></button><button aria-label="螺旋"><svg><use href="#helix"/></svg></button><button aria-label="平面曲面"><svg><use href="#plane"/></svg></button><i></i>
        <button aria-label="拉伸"><svg><use href="#extrude"/></svg></button><button aria-label="按住并拖动"><svg><use href="#press"/></svg></button><button aria-label="扫掠"><svg><use href="#sweep"/></svg></button><button aria-label="旋转"><svg><use href="#revolve"/></svg></button><button aria-label="放样"><svg><use href="#loft"/></svg></button><i></i>
        <button class="uni" aria-label="并集"><svg><use href="#bool"/></svg></button><button class="sub" aria-label="差集"><svg><use href="#bool"/></svg></button><button class="int" aria-label="交集"><svg><use href="#bool"/></svg></button><i></i>
        <button aria-label="三维移动"><svg><use href="#move3"/></svg></button><button aria-label="三维旋转"><svg><use href="#rot3"/></svg></button><button aria-label="三维对齐"><svg><use href="#align3"/></svg></button>
      </div>
    </div>
    <div class="stack">
      <div class="vbar">
        <b></b><button aria-label="直线"><svg><use href="#line"/></svg></button><button aria-label="构造线"><svg><use href="#xline"/></svg></button><button aria-label="多段线"><svg><use href="#pline"/></svg></button><button aria-label="正多边形"><svg><use href="#poly"/></svg></button><button aria-label="矩形"><svg><use href="#rect"/></svg></button><button aria-label="圆弧"><svg><use href="#arc"/></svg></button><button aria-label="圆"><svg><use href="#circle"/></svg></button><button aria-label="修订云线"><svg><use href="#cloud"/></svg></button><button aria-label="样条曲线"><svg><use href="#spline"/></svg></button><button aria-label="椭圆"><svg><use href="#ellipse"/></svg></button><button aria-label="椭圆弧"><svg><use href="#earc"/></svg></button><button aria-label="插入块"><svg><use href="#insert"/></svg></button><button aria-label="创建块"><svg><use href="#block"/></svg></button><button aria-label="点"><svg><use href="#point"/></svg></button><button aria-label="图案填充"><svg><use href="#hatch"/></svg></button><button aria-label="渐变色"><svg><use href="#grad"/></svg></button><button aria-label="面域"><svg><use href="#region"/></svg></button><button aria-label="表格"><svg><use href="#table"/></svg></button><button aria-label="多行文字"><svg><use href="#mtext"/></svg></button>
      </div>
    </div>
  </aside>

  <section class="mdi">
    <div class="window">
      <div class="wtitle">
        <svg class="doc" viewBox="0 0 12 12"><path d="M1 1h8v5H1z" fill="#eef5fa" stroke="#335a78" stroke-dasharray="2 1"/><path d="M4 2h4v3H4z" fill="#2c6384"/><path d="M1 6l4-1 6 2v4H1z" fill="#f2c926"/><path d="M1 9l5-3 3 5H1z" fill="#fbe56b"/></svg>
        <h2>Drawing1.dwg</h2>
        <div class="wbtns">
          <button aria-label="最小化图形"><svg viewBox="0 0 12 12"><path d="M2 6h8v3H2z" fill="#fff" stroke="#4b5d71"/></svg></button>
          <button aria-label="最大化图形"><svg viewBox="0 0 12 12"><path d="M2 2h8v7H2z" fill="#fff" stroke="#4b5d71"/><path d="M5 5h2v1H5z" stroke="#4b5d71"/></svg></button>
          <button class="close" aria-label="关闭图形"><svg viewBox="0 0 12 12"><path d="M3 3l6 6M9 3L3 9" stroke="#702820" stroke-width="4"/><path d="M3 3l6 6M9 3L3 9" stroke="#fff" stroke-width="2"/></svg></button>
        </div>
      </div>
      <div class="canvas">
        <span class="origin"></span>
        <svg class="ucs" viewBox="0 0 62 62"><path d="M7.500 22v29M11 54.500h32M4.500 51.500h6v6h-6zM7.500 16l2 8h-4zM47 54.500l-9-2v4z" fill="none" stroke="#d5d5d5"/><text x="5" y="10">Y</text><text x="52" y="59">X</text></svg>
      </div>
      <div class="tabs">
        <button aria-label="第一个"><svg viewBox="0 0 10 10"><path d="M2 1v8" stroke="#111" stroke-width="1.500"/><path d="M8 1v8L3 5z"/></svg></button><button aria-label="上一页"><svg viewBox="0 0 10 10"><path d="M7 1v8L3 5z"/></svg></button><button aria-label="下一页"><svg viewBox="0 0 10 10"><path d="M3 1v8l4-4z"/></svg></button><button aria-label="最后一个"><svg viewBox="0 0 10 10"><path d="M2 1v8l5-4z"/><path d="M8 1v8" stroke="#111" stroke-width="1.500"/></svg></button>
        <a class="tab on" href="#model"><svg viewBox="0 0 29 11" preserveAspectRatio="none"><path d="M0 0l5 11h19l5-11z"/></svg><span>模型</span></a>
        <a class="tab" href="#layout1"><svg viewBox="0 0 29 11" preserveAspectRatio="none"><path d="M0 0l5 10h19l5-10"/></svg><span>布局1</span></a>
        <a class="tab" href="#layout2"><svg viewBox="0 0 29 11" preserveAspectRatio="none"><path d="M0 0l5 10h19l5-10"/></svg><span>布局2</span></a>
      </div>
    </div>
    <div class="brand">
      <svg class="deer" viewBox="50 80 138 175"><path d="M62 101l5-2 4-5 3 4 4 8 11 2 14 17-5 5-15 2c-5 10-5 20 0 29 10 7 26 8 44 11 20 3 31 7 36 20l3 15-3-1c1 8-2 15-2 23l6 27h-10l-5-26-6-16-13-5c-15 4-25 6-37 2l-6 19 1 26H77l4-31-4-28C63 184 54 172 57 152c2-12 10-19 17-30l-8-7-3-6z" fill="#d4d4d5"/><path d="M82 106C86 99 86 91 91 85M88 105l12 1c25-4 33-10 50-8 14 2 23-1 33-8M101 106l-11-17M112 105l-7-18 4-5M128 101l-8-11 3-6M128 101l-4 7M144 98l-11-11M160 99l-8-9M152 98l-3 8" fill="none" stroke="#dedede" stroke-width="4"/></svg>
      <div class="words"><strong><span>3D</span>溜溜网</strong><small>3D66.COM</small></div>
    </div>
  </section>

  <aside class="dock right">
    <div class="stack">
      <div class="vbar">
        <b></b><button aria-label="命名视图"><svg><use href="#views"/></svg></button><i></i>
        <button class="c-top" aria-label="俯视"><svg><use href="#cube"/></svg></button><button class="c-bot" aria-label="仰视"><svg><use href="#cubein"/></svg></button><button class="c-left" aria-label="左视"><svg><use href="#cube"/></svg></button><button class="c-right" aria-label="右视"><svg><use href="#cube"/></svg></button><button class="c-front" aria-label="主视"><svg><use href="#cube"/></svg></button><button class="c-back" aria-label="后视"><svg><use href="#cubein"/></svg></button><i></i>
        <button class="i-sw" aria-label="西南等轴测"><svg><use href="#iso"/></svg></button><button class="i-se" aria-label="东南等轴测"><svg><use href="#iso"/></svg></button><button class="i-ne" aria-label="东北等轴测"><svg><use href="#iso"/></svg></button><button class="i-nw" aria-label="西北等轴测"><svg><use href="#iso"/></svg></button><i></i>
        <button aria-label="相机"><svg><use href="#camera"/></svg></button><i></i><button aria-label="上一视图"><svg><use href="#back"/></svg></button>
      </div>
      <div class="vbar">
        <b></b><button aria-label="二维线框"><svg><use href="#vs2d"/></svg></button><i></i>
        <button aria-label="三维线框"><svg><use href="#wire"/></svg></button><button aria-label="三维隐藏"><svg><use href="#hidden"/></svg></button><button aria-label="真实"><svg><use href="#real"/></svg></button><button aria-label="概念"><svg><use href="#concept"/></svg></button><i></i>
        <button aria-label="视觉样式"><svg><use href="#vsman"/></svg></button>
      </div>
    </div>
    <div class="stack">
      <div class="vbar">
        <b></b><button aria-label="删除"><svg><use href="#erase"/></svg></button><button aria-label="复制对象"><svg><use href="#copyobj"/></svg></button><button aria-label="镜像"><svg><use href="#mirror"/></svg></button><button aria-label="偏移"><svg><use href="#offset"/></svg></button><button aria-label="阵列"><svg><use href="#array"/></svg></button><button aria-label="移动"><svg><use href="#move"/></svg></button><button aria-label="旋转对象"><svg><use href="#rotate"/></svg></button><button aria-label="缩放"><svg><use href="#scale"/></svg></button><button aria-label="拉长"><svg><use href="#stretch"/></svg></button><button aria-label="修剪"><svg><use href="#trim"/></svg></button><button aria-label="延伸"><svg><use href="#extend"/></svg></button><button aria-label="打断于点"><svg><use href="#breakpt"/></svg></button><button aria-label="打断"><svg><use href="#break"/></svg></button><button aria-label="合并"><svg><use href="#join"/></svg></button><button aria-label="倒角"><svg><use href="#chamfer"/></svg></button><button aria-label="圆角"><svg><use href="#fillet"/></svg></button><button aria-label="分解"><svg><use href="#explode"/></svg></button>
      </div>
      <div class="vbar">
        <b></b><button class="o-a" aria-label="前置"><svg><use href="#order"/></svg></button><button class="o-b" aria-label="后置"><svg><use href="#order"/></svg></button><button class="o-c" aria-label="置于对象之上"><svg><use href="#order"/></svg></button><button class="o-d" aria-label="置于对象之下"><svg><use href="#order"/></svg></button>
      </div>
    </div>
  </aside>
</main>

<footer class="command">
  <div class="log"><span>命令:</span><span>COMMANDLINE</span><svg viewBox="0 0 8 4"><path d="M0 4l4-4 4 4z" fill="#333"/></svg></div>
</footer>
</body>
</html>
```
FILE: styles.css
```css
* { box-sizing: border-box; }
body {
  margin: 0;
  height: 100vh;
  display: flex;
  flex-direction: column;
  overflow: hidden;
  background: #efefef;
  color: #222;
  font: 9px/12px "Liberation Sans", "Noto Sans CJK SC", sans-serif;
}
button { display: flex; align-items: center; justify-content: center; margin: 0; padding: 0; border: 0; background: none; color: inherit; font: inherit; }
svg { display: block; }
.sprite { position: absolute; width: 0; height: 0; }

.titlebar { flex: none; height: 12px; display: flex; align-items: flex-start; overflow: hidden; background: #e8668f; }
.logo { width: 9px; height: 8px; }
.titlebar h1 { flex: 1; margin: 0; padding-left: 60px; text-align: center; font: 12px/8px "Open Sans", sans-serif; color: #5d3042; }
.sys { display: flex; padding-right: 2px; }
.sys button { width: 19px; height: 8px; }
.sys .close { width: 33px; background: #ca4f50; }
.sys svg { width: 10px; height: 8px; }

.menu { flex: none; height: 15px; display: flex; gap: 10px; background: #f5f7f8; border-bottom: 1px solid #e3e5e7; white-space: nowrap; }
.menu u { text-underline-offset: 1px; }

.row { flex: none; height: 20px; display: flex; gap: 4px; padding-left: 2px; }
.bar { display: flex; align-items: center; height: 20px; padding: 0 2px; background: #f3f3f3; border-left: 1px solid #bbb; border-right: 1px solid #a9a9a9; border-bottom: 1px solid #c9c9c9; }
.bar > i { width: 1px; height: 14px; margin: 0 2px 0 1px; background: #999; }
.bar > b { width: 4px; height: 17px; margin-right: 1px; border: solid #c4c4c4; border-width: 0 1px; }
.bar button { width: 17px; height: 18px; }
.bar svg { width: 14px; height: 14px; }
.bar .drop { width: 9px; color: #223; }
.bar .drop svg { width: 6px; }
.bar .drop.off { color: #bbb; }

.combo { position: relative; display: flex; align-items: center; height: 16px; padding-left: 2px; border: 1px solid #c6c6c6; background: #fff; }
.combo select { flex: 1; min-width: 0; height: 14px; margin: 0; padding: 0 1px; border: 0; appearance: none; background: none; color: #111; opacity: 1; font: 8px/14px "Liberation Mono", "Noto Sans CJK SC", monospace; }
.combo::after { content: ""; position: absolute; right: 4px; top: 4px; width: 4px; height: 4px; border: solid #333; border-width: 0 1px 1px 0; transform: rotate(45deg); }
.combo.dim::after { border-color: #aaa; }
.combo.off { background: #ececec; }
.combo.off select { color: #888; font-size: 9px; }
.combo svg { width: 12px; height: 12px; }
.combo svg.sw, .w110 svg { width: 10px; height: 10px; }
.stroke { width: 32px; height: 1px; background: #222; }
.stroke.long { width: 45px; }
.w74 { width: 74px; }
.w87 { width: 87px; }
.w93 { width: 93px; }
.w110 { width: 110px; }
.w117 { width: 117px; }
.w128 { width: 128px; }
.w128 select { padding-left: 4px; }
.w220 { width: 220px; }

.work { flex: 1; min-height: 0; display: flex; padding-top: 1px; }
.dock { flex: none; display: flex; gap: 2px; }
.dock.left { padding-right: 1px; }
.dock.right { padding-left: 1px; }
.stack { width: 18px; display: flex; flex-direction: column; gap: 2px; }
.stack.cut { width: 13px; overflow: hidden; }
.vbar { display: flex; flex-direction: column; align-items: flex-end; padding-bottom: 3px; background: #f5f5f5; border-right: 1px solid #b5b5b5; border-bottom: 1px solid #b5b5b5; }
.vbar > b { align-self: stretch; height: 4px; margin: 2px 1px; border: solid #bbb; border-width: 1px 0; }
.vbar > i { align-self: stretch; height: 1px; margin: 2px 1px; background: #bbb; }
.vbar button { width: 17px; height: 16px; padding-top: 1px; }
.vbar svg { width: 13px; height: 13px; flex: none; }

.solid { --f: #88aad2; --t: #d7e5f5; --s: #5580b3; }
.c-top { --t: #2a69a8; --f: #d3e8f8; --s: #a9cdea; }
.c-bot { --b: #cae3f6; --d: #2a69a8; }
.c-left { --t: #e4f2fb; --f: #4584bd; --s: #d3e8f8; }
.c-right { --t: #e4f2fb; --f: #cae3f6; --s: #2a69a8; }
.c-front { --t: #d3e8f8; --f: #2a69a8; --s: #a9cdea; }
.c-back { --b: #2a69a8; --d: #a9cdea; }
.i-sw { --t: #d9ebf7; --f: #3274ad; --s: #75a7ce; }
.i-se { --t: #d9ebf7; --f: #8fbbdb; --s: #3274ad; }
.i-ne { --t: #78a9cf; --f: #d9ebf7; --s: #3274ad; }
.i-nw { --t: #78a9cf; --f: #3274ad; --s: #d9ebf7; }
.uni { --f: #82b7cf; --s: #82b7cf; --t: #82b7cf; }
.sub { --f: #82b7cf; --s: #fff; --t: #fff; }
.int { --f: #fff; --s: #fff; --t: #82b7cf; }
.o-a { --f: #91b9d8; --s: #91b9d8; --t: #2f6d9f; }
.o-b { --f: #2f6d9f; --s: #2f6d9f; --t: #b7d5eb; }
.o-c { --f: #2f6d9f; --s: #91b9d8; --t: #2f6d9f; }
.o-d { --f: #2f6d9f; --s: #e2f0fa; --t: #a6cbe5; }

.mdi { position: relative; flex: 1; min-width: 0; display: flex; margin-bottom: 6px; padding: 4px 2px 0 3px; background: linear-gradient(#b7b3b0 0 1px, #8b8683 1px 3px, #a5a2a0 3px); }
.window { flex: 1; min-width: 0; display: flex; flex-direction: column; padding: 0 7px 5px 6px; border: 1px solid #34515d; border-radius: 5px 5px 0 0; background: linear-gradient(#9db9d8, #bdd3ec 22px, #e0ebf6 70px, #b8d5ee 100px, #b4d5ef); box-shadow: inset 0 0 0 1px #d7e8f6; }
.wtitle { flex: none; height: 22px; display: flex; align-items: center; }
.doc { width: 12px; height: 12px; }
.wtitle h2 { flex: 1; margin: 0; text-align: center; font: 12px/20px "Open Sans", sans-serif; color: #222; }
.wbtns { display: flex; gap: 2px; }
.wbtns button { width: 23px; height: 13px; border: 1px solid #6883a1; border-radius: 2px; background: linear-gradient(#d2e1f0 50%, #a9c1db 50%); }
.wbtns .close { border-color: #7d2d25; background: linear-gradient(#e39a8b 50%, #c34029 50%); }
.wbtns svg { width: 11px; height: 11px; }
.canvas { position: relative; flex: 1; background: #000; }
.origin { position: absolute; left: 0; top: 0; width: 4px; height: 4px; border: 1px solid #ccc; }
.ucs { position: absolute; left: 3px; bottom: 4px; width: 62px; height: 62px; }
.ucs text { fill: #c5c5c5; font: 11px "Liberation Sans", sans-serif; }
.tabs { flex: none; height: 12px; display: flex; background: #f4f4f4; }
.tabs button { width: 13px; height: 12px; border-right: 1px solid #c6c6c6; }
.tabs svg { width: 9px; height: 9px; }
.tab { position: relative; display: flex; padding: 0 6px; margin-right: -4px; color: #222; text-decoration: none; line-height: 12px; }
.tabs .tab svg { position: absolute; left: 0; top: 0; width: 100%; height: 11px; fill: none; stroke: #222; }
.tabs .tab.on svg { fill: #000; }
.tab:first-of-type { margin-left: 4px; }
.tab span { position: relative; }
.tab.on { color: #fff; }

.brand { position: absolute; right: 11px; bottom: -1px; width: 188px; height: 96px; display: flex; align-items: flex-start; gap: 5px; padding: 16px 6px; background: #223056; color: #d8d9dc; }
.deer { flex: none; width: 46px; height: 58px; }
.words { display: flex; flex-direction: column; white-space: nowrap; }
.words strong { display: flex; align-items: center; font: bold 27px/38px "Noto Sans CJK SC", sans-serif; }
.words strong span { font: 35px/38px "Liberation Sans", sans-serif; }
.words small { padding-left: 1px; font: 200 23px/22px "DejaVu Sans", sans-serif; }

.command { flex: none; height: 14px; padding-top: 4px; border-top: 2px solid #858585; background: #efefef; }
.log { display: flex; gap: 10px; height: 10px; margin-left: 6px; padding: 1px 6px 0 2px; overflow: hidden; border-top: 1px solid #888; border-left: 1px solid #888; background: #fff; font: 10px/14px "Liberation Mono", "Noto Sans CJK SC", monospace; }
.log svg { width: 8px; height: 4px; margin: 3px 0 0 auto; }
```
